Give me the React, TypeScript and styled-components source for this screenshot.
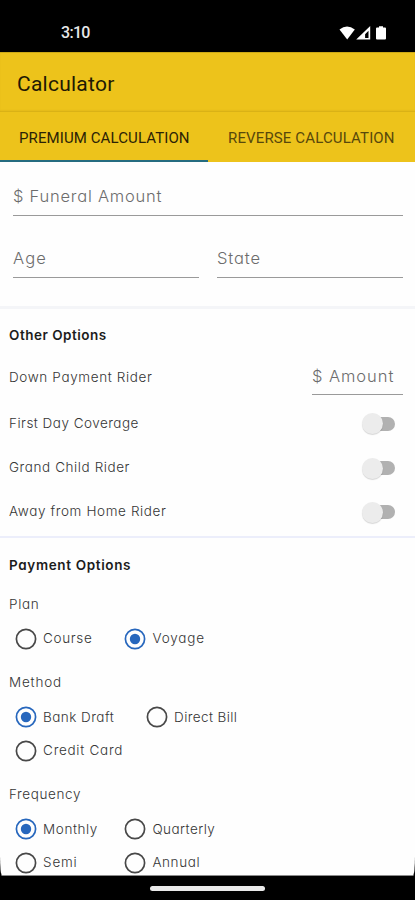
import React, { useState } from "react";
import styled, { createGlobalStyle } from "styled-components";

const GlobalStyle = createGlobalStyle`
  * { box-sizing: border-box; }
  body { margin: 0; background: #000; }
`;

const Screen = styled.div`
  width: 415px;
  height: 900px;
  display: flex;
  flex-direction: column;
  overflow: hidden;
  background: #000;
  font-family: Inter, "Open Sans", sans-serif;
  font-feature-settings: "cv11";
  color: #3c3c3c;
`;

const StatusBar = styled.div`
  flex: none;
  height: 52px;
  padding: 13px 28px 0 61px;
  display: flex;
  align-items: center;
  justify-content: space-between;
  color: #e8e8e8;
  font: 500 16px/20px Roboto, sans-serif;
  letter-spacing: -0.7px;
`;

const AppBar = styled.header`
  flex: none;
  height: 60px;
  padding: 2px 17px 0;
  display: flex;
  align-items: center;
  background: #edc31b;
  border-top: 1px solid #cda916;
  box-shadow: inset 0 -2px 2px -1px rgba(140, 105, 0, 0.25);
  color: #1f1904;
  font: 450 21px/24px Roboto, sans-serif;
  letter-spacing: 0.25px;
`;

const Tabs = styled.nav`
  flex: none;
  height: 50px;
  display: grid;
  grid-template-columns: 208px 207px;
  background: #edc31b;
`;

const Tab = styled.button<{ $active: boolean; $track: number }>`
  border: 0;
  border-bottom: 2px solid ${(p) => (p.$active ? "#256c80" : "#edc31b")};
  padding: 3px 0 0 ${(p) => (p.$active ? 19 : 20)}px;
  background: none;
  color: ${(p) => (p.$active ? "#2b2206" : "#58480b")};
  font: 450 15px/20px Roboto, sans-serif;
  letter-spacing: ${(p) => p.$track}px;
  text-align: left;
  white-space: nowrap;
`;

const Content = styled.main`
  flex: none;
  height: 714px;
  overflow: hidden;
  background: #fefefe;
  border-bottom: 1px solid #8a8a8a;
  border-radius: 0 0 2px 2px / 0 0 20px 20px;
`;

const Amounts = styled.section`
  height: 147px;
  padding: 14px 12px 0 13px;
  display: grid;
  grid-template-columns: 186px 186px;
  grid-template-rows: 40px 40px;
  gap: 22px 18px;
  border-bottom: 3px solid #f4f5f8;
`;

const Field = styled.div<{ $wide?: boolean; $track: number }>`
  grid-column: ${(p) => (p.$wide ? "1 / -1" : "auto")};
  height: 40px;
  padding-top: 10px;
  border-bottom: 1.5px solid #9a9a9a;
  color: #6c6c6c;
  font-size: 16.5px;
  font-weight: 300;
  line-height: 20px;
  letter-spacing: ${(p) => p.$track}px;
  white-space: nowrap;
`;

const Options = styled.section`
  height: 229px;
  padding: 16px 12px 0 9px;
  border-bottom: 2px solid #eceefb;
`;

const Heading = styled.h2<{ $track: number }>`
  margin: 0;
  height: 20px;
  color: #1c1c1c;
  font-size: 13.5px;
  font-weight: 600;
  line-height: 20px;
  letter-spacing: ${(p) => p.$track}px;
`;

const RiderRow = styled.div`
  height: 50px;
  margin: 1px 0 4.8px;
  display: flex;
  align-items: flex-end;
  justify-content: space-between;
`;

const RiderField = styled(Field)`
  width: 91px;
  height: 39px;
  margin-bottom: 1px;
`;

const SwitchRow = styled.div`
  height: 44.2px;
  padding-right: 8px;
  display: flex;
  align-items: center;
  justify-content: space-between;
`;

const Label = styled.span<{ $track: number }>`
  color: #353535;
  font-size: 13.5px;
  font-weight: 300;
  line-height: 20px;
  letter-spacing: ${(p) => p.$track}px;
  white-space: nowrap;
`;

const RiderLabel = styled(Label)`
  margin-bottom: 9px;
`;

const Track = styled.button`
  width: 33px;
  height: 14px;
  margin-top: 2px;
  padding: 0 0 0 6px;
  display: flex;
  align-items: center;
  border: 0;
  background: none;
`;

const Thumb = styled.span`
  flex: none;
  width: 21px;
  height: 21px;
  border-radius: 50%;
  background: #ececec;
  box-shadow: 0 1px 1px rgba(0, 0, 0, 0.16);
`;

const Rail = styled.span<{ $on: boolean }>`
  width: 27px;
  height: 14px;
  display: flex;
  align-items: center;
  border-radius: 7px;
  background: ${(p) => (p.$on ? "#8fb1df" : "#b1b1b1")};

  ${Thumb} {
    margin-left: ${(p) => (p.$on ? 9 : -6)}px;
  }
`;

const Payment = styled.section`
  padding: 17px 9px 0;
`;

const Groups = styled.div`
  padding-top: 3px;
`;

const Group = styled.div`
  padding-top: 16px;
  margin-bottom: 1.3px;
  display: flex;
  flex-direction: column;
`;

const Choices = styled.div<{ $second: number }>`
  margin-top: 7.5px;
  padding-left: 5.7px;
  display: grid;
  grid-template-columns: ${(p) => p.$second}px auto;
  grid-auto-rows: 33.6px;
`;

const Choice = styled.button`
  padding: 0;
  display: flex;
  align-items: center;
  gap: 6.4px;
  border: 0;
  background: none;
  font-family: inherit;
  font-feature-settings: inherit;
  text-align: left;

  svg {
    flex: none;
    margin-top: 1px;
  }
`;

const NavBar = styled.footer`
  flex: 1;
  display: flex;
  align-items: center;
  justify-content: center;
`;

const HomeHandle = styled.div`
  width: 115px;
  height: 5px;
  border-radius: 3px;
  background: #e9e9e9;
`;

function RadioIcon({ on }: { on: boolean }) {
  const color = on ? "#2767bd" : "#484848";
  return (
    <svg width="22" height="22" viewBox="0 0 22 22" fill="none">
      <circle cx="11" cy="11" r="9.6" stroke={color} strokeWidth="1.7" />
      {on && <circle cx="11" cy="11" r="5.2" fill={color} />}
    </svg>
  );
}

function StatusIcons() {
  return (
    <svg width="48" height="16" viewBox="0 0 48 16" fill="#fff">
      <path d="M.5 4.6Q8 -1.6 15.8 4.6L8.2 14.4Z" />
      <path fillRule="evenodd" d="M31.2 1V14.6H17.2ZM29.5 5.7L26.1 9.2V13H29.5Z" />
      <path d="M40 1.2h4v1.3h2q1 0 1 1V13.6q0 1-1 1h-8q-1 0-1-1V3.5q0-1 1-1h2Z" />
    </svg>
  );
}

type Item = [label: string, track: number];

const groups: { title: Item; second: number; items: Item[] }[] = [
  { title: ["Plan", 0.7], second: 109.3, items: [["Course", 0.65], ["Voyage", 0.85]] },
  {
    title: ["Method", 0.8],
    second: 131,
    items: [["Bank Draft", 0.45], ["Direct Bill", 0.4], ["Credit Card", 0.72]],
  },
  {
    title: ["Frequency", 0.62],
    second: 109.3,
    items: [["Monthly", 0.58], ["Quarterly", 0.45], ["Semi", 0.8], ["Annual", 0.6]],
  },
];

const switches: Item[] = [
  ["First Day Coverage", 0.48],
  ["Grand Child Rider", 0.58],
  ["Away from Home Rider", 0.62],
];

export default function App() {
  const [enabled, setEnabled] = useState<Record<string, boolean>>({});
  const [selected, setSelected] = useState<Record<string, string>>({
    Plan: "Voyage",
    Method: "Bank Draft",
    Frequency: "Monthly",
  });

  return (
    <Screen>
      <GlobalStyle />
      <StatusBar>
        3:10
        <StatusIcons />
      </StatusBar>
      <AppBar>Calculator</AppBar>
      <Tabs>
        <Tab $active $track={0.1}>PREMIUM CALCULATION</Tab>
        <Tab $active={false} $track={0.14}>REVERSE CALCULATION</Tab>
      </Tabs>
      <Content>
        <Amounts>
          <Field $wide $track={0.77}>$ Funeral Amount</Field>
          <Field $track={1.2}>Age</Field>
          <Field $track={0.9}>State</Field>
        </Amounts>
        <Options>
          <Heading $track={0.5}>Other Options</Heading>
          <RiderRow>
            <RiderLabel $track={0.63}>Down Payment Rider</RiderLabel>
            <RiderField $track={0.95}>$ Amount</RiderField>
          </RiderRow>
          {switches.map(([name, track]) => (
            <SwitchRow key={name}>
              <Label $track={track}>{name}</Label>
              <Track
                role="switch"
                aria-checked={!!enabled[name]}
                aria-label={name}
                onClick={() => setEnabled({ ...enabled, [name]: !enabled[name] })}
              >
                <Rail $on={!!enabled[name]}>
                  <Thumb />
                </Rail>
              </Track>
            </SwitchRow>
          ))}
        </Options>
        <Payment>
          <Heading $track={0.64}>Payment Options</Heading>
          <Groups>
            {groups.map(({ title: [title, titleTrack], second, items }) => (
              <Group key={title}>
                <Label $track={titleTrack}>{title}</Label>
                <Choices $second={second}>
                  {items.map(([name, track]) => (
                    <Choice key={name} onClick={() => setSelected({ ...selected, [title]: name })}>
                      <RadioIcon on={selected[title] === name} />
                      <Label $track={track}>{name}</Label>
                    </Choice>
                  ))}
                </Choices>
              </Group>
            ))}
          </Groups>
        </Payment>
      </Content>
      <NavBar>
        <HomeHandle />
      </NavBar>
    </Screen>
  );
}
